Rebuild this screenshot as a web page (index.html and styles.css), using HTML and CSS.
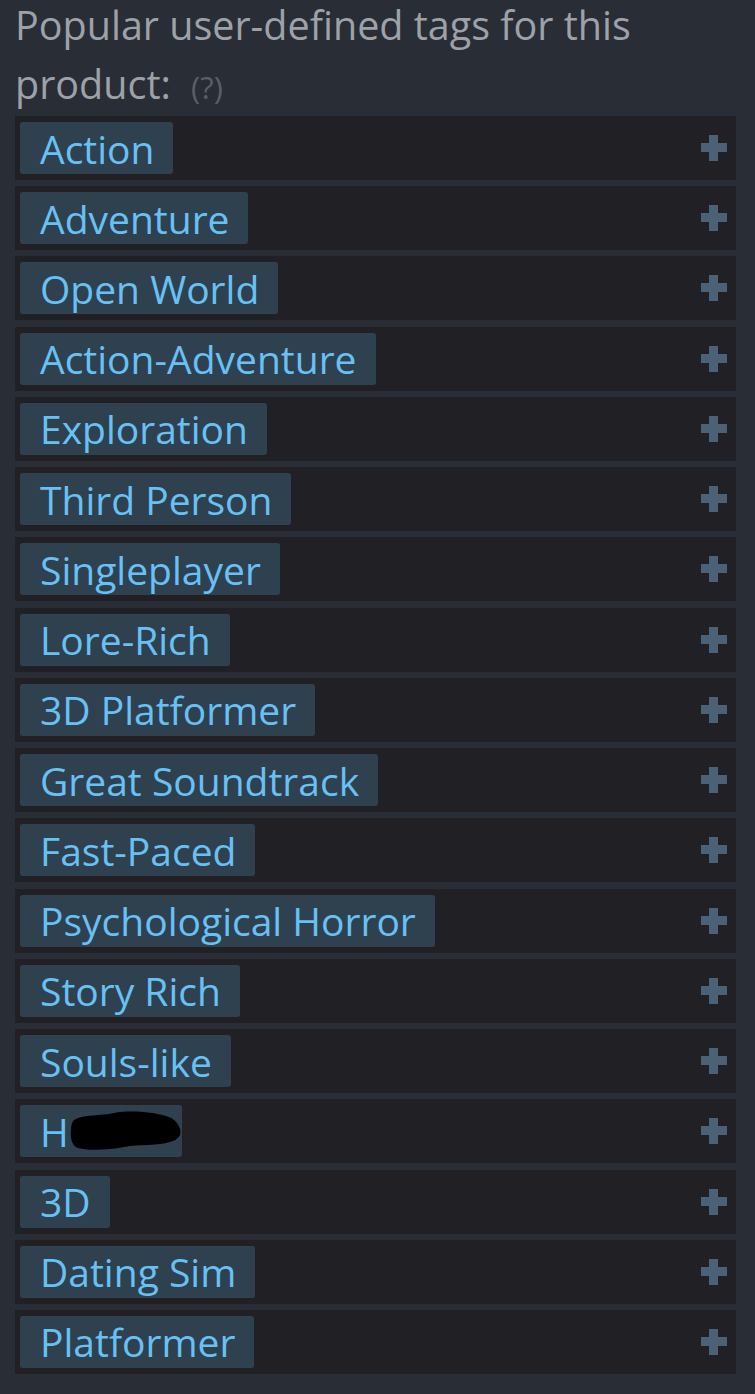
FILE: index.html
```html
<!DOCTYPE html>
<html lang="en">

<head>
    <meta charset="UTF-8">
    <meta name="viewport" content="width=device-width, initial-scale=1.0">
    <title>Popular user-defined tags</title>
    <link rel="stylesheet" href="styles.css">
</head>

<body>
    <div class="tags-block">
        <div class="tags-header">
            Popular user-defined tags for this product: <span class="help">(?)</span>
        </div>

        <div class="tag-list">
            <div class="tag-row"><a class="tag">Action</a><span class="add"></span></div>
            <div class="tag-row"><a class="tag">Adventure</a><span class="add"></span></div>
            <div class="tag-row"><a class="tag">Open World</a><span class="add"></span></div>
            <div class="tag-row"><a class="tag">Action-Adventure</a><span class="add"></span></div>
            <div class="tag-row"><a class="tag">Exploration</a><span class="add"></span></div>
            <div class="tag-row"><a class="tag">Third Person</a><span class="add"></span></div>
            <div class="tag-row"><a class="tag">Singleplayer</a><span class="add"></span></div>
            <div class="tag-row"><a class="tag">Lore-Rich</a><span class="add"></span></div>
            <div class="tag-row"><a class="tag">3D Platformer</a><span class="add"></span></div>
            <div class="tag-row"><a class="tag">Great Soundtrack</a><span class="add"></span></div>
            <div class="tag-row"><a class="tag">Fast-Paced</a><span class="add"></span></div>
            <div class="tag-row"><a class="tag">Psychological Horror</a><span class="add"></span></div>
            <div class="tag-row"><a class="tag">Story Rich</a><span class="add"></span></div>
            <div class="tag-row"><a class="tag">Souls-like</a><span class="add"></span></div>
            <div class="tag-row">
                <a class="tag tag-hidden">H<svg class="scribble" width="112" height="42" viewBox="0 0 112 42"><path d="M4 10 C14 4 30 6 44 3 C60 0 82 2 96 6 C104 8 108 13 110 19 C112 25 108 30 100 32 C88 36 70 34 54 37 C38 40 18 41 8 38 C2 36 0 28 1 20 C1 15 2 12 4 10 Z" fill="#000"/></svg></a>
                <span class="add"></span>
            </div>
            <div class="tag-row"><a class="tag">3D</a><span class="add"></span></div>
            <div class="tag-row"><a class="tag">Dating Sim</a><span class="add"></span></div>
            <div class="tag-row"><a class="tag">Platformer</a><span class="add"></span></div>
        </div>
    </div>
</body>

</html>
```

FILE: styles.css
```css
body {
    margin: 0;
    padding: 0 19px 0 15px;
    background-color: #292d35;
    font-family: "Open Sans", Arial, sans-serif;
}
.tags-header {
    margin-top: -4px;
    margin-bottom: 2px;
    font-size: 39.5px;
    line-height: 59px;
    color: #9ca2a8;
}
.help {
    margin-left: 10px;
    font-size: 31px;
    line-height: 1;
    color: #5a5f66;
}
.tag-row {
    display: flex;
    justify-content: space-between;
    align-items: center;
    height: 64px;
    margin-bottom: 6.24px;
    padding: 0 9px 0 5px;
    background-color: #212125;
}
.tag {
    display: flex;
    align-items: center;
    height: 52px;
    padding: 0 19px 0 20px;
    border-radius: 3px;
    background-color: #2f404f;
    color: #67c1f5;
    font-size: 39px;
    cursor: pointer;
}
.tag-hidden {
    padding-right: 0;
}
.scribble {
    display: block;
    margin-left: 1px;
}
.add {
    position: relative;
    width: 26px;
    height: 26px;
}
.add::before,
.add::after {
    content: "";
    position: absolute;
    background-color: #4b6176;
}
.add::before {
    left: 0;
    top: 8px;
    width: 26px;
    height: 9px;
}
.add::after {
    left: 8px;
    top: 0;
    width: 9px;
    height: 26px;
}
```
